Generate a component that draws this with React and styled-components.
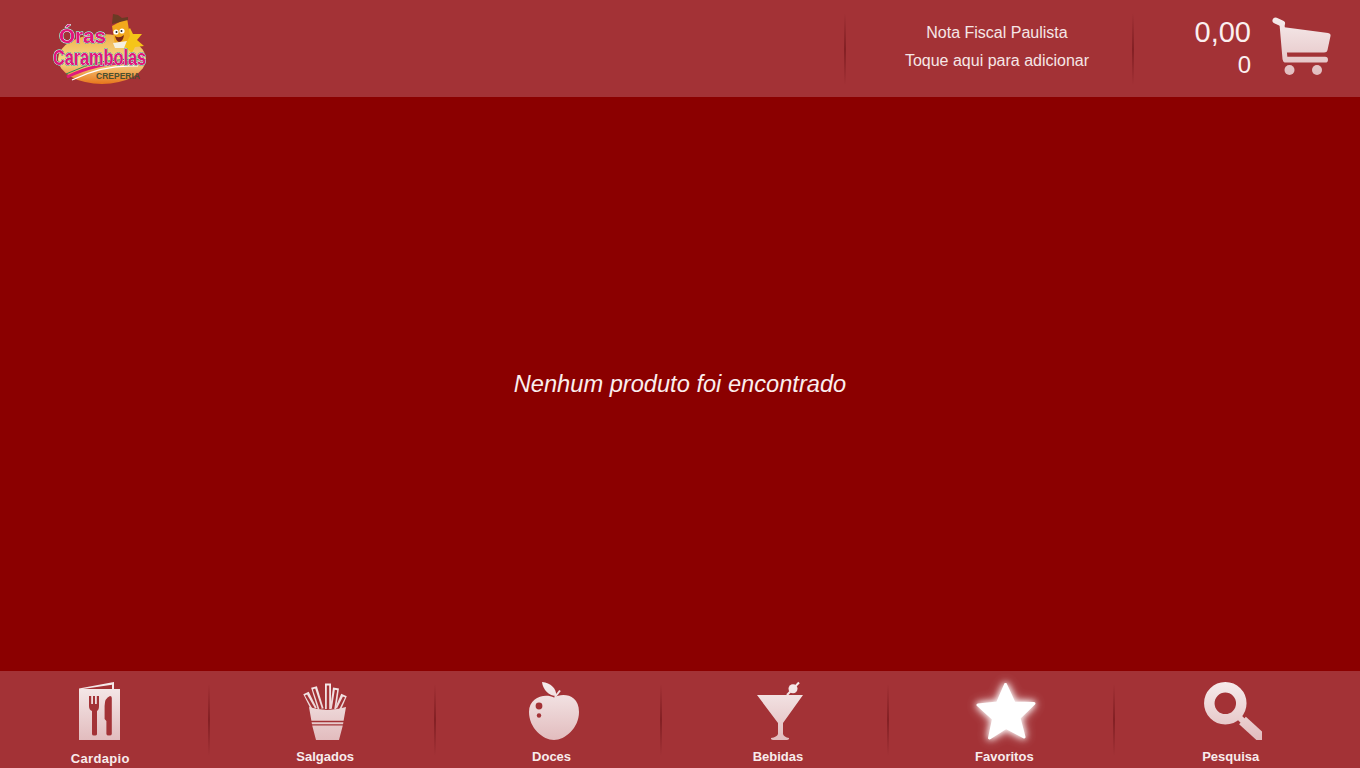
import React from "react";
import styled, { createGlobalStyle } from "styled-components";

const Global = createGlobalStyle`
  html, body { margin: 0; padding: 0; height: 100%; }
  body { background: #8b0000; font-family: "Liberation Sans", Arial, sans-serif; }
  #root { height: 100%; }
`;

const Page = styled.div`
  display: flex;
  flex-direction: column;
  width: 1360px;
  height: 768px;
  overflow: hidden;
`;

const Header = styled.header`
  display: flex;
  align-items: center;
  height: 97px;
  background: #a33236;
`;

const LogoCell = styled.div`
  flex: 1;
  padding-left: 52px;
`;

const Logo = styled.svg`
  display: block;
  width: 96px;
  height: 70px;
  overflow: visible;
`;

const Separator = styled.div`
  flex: none;
  width: 2px;
  height: 72px;
  background: linear-gradient(to bottom, rgba(110, 20, 24, 0), rgba(110, 20, 24, 0.6) 50%, rgba(110, 20, 24, 0));
`;

const Nota = styled.div`
  flex: none;
  width: 286px;
  box-sizing: border-box;
  padding: 0 0 4px 16px;
  text-align: center;
  color: #f6e6e6;
  font-size: 16px;
  line-height: 28px;
`;

const CartCell = styled.div`
  display: flex;
  justify-content: flex-end;
  align-items: center;
  width: 226px;
  padding-right: 29px;
  box-sizing: border-box;
  gap: 21px;
`;

const Totals = styled.div`
  text-align: right;
  color: #fbf0f0;
`;

const Amount = styled.div`
  font-size: 29px;
  line-height: 32px;
`;

const Count = styled.div`
  font-size: 24px;
  line-height: 34px;
`;

const Main = styled.main`
  flex: 1;
  display: flex;
  align-items: center;
  justify-content: center;
  color: #fbeeee;
  font-size: 23.65px;
  font-style: italic;
`;

const Nav = styled.nav`
  display: flex;
  align-items: center;
  height: 97px;
  background: #a33236;
`;

const NavItem = styled.div`
  flex: none;
  display: flex;
  flex-direction: column;
  align-items: center;
  box-sizing: border-box;
  width: ${(p) => (p.$first ? "207.5px" : "224.4px")};
  height: 97px;
  padding: 11px ${(p) => (p.$first ? "7px" : "0")} 0 ${(p) => (p.$first ? "0" : "11px")};
`;

const Icon = styled.svg`
  display: block;
  flex: none;
  height: 58px;
  overflow: visible;
`;

const CartGlyph = styled(Icon)`
  height: 59px;
  margin-bottom: 4px;
`;

const GlowIcon = styled(Icon)`
  filter: drop-shadow(0 0 3px #fff) drop-shadow(0 0 5px rgba(255, 255, 255, 0.7));
`;

const Label = styled.div`
  margin-top: ${(p) => (p.$first ? "11px" : "9px")};
  padding-right: ${(p) => (p.$first ? "0" : "4px")};
  color: #f8ecec;
  font-size: 13px;
  font-weight: bold;
  line-height: 16px;
  letter-spacing: ${(p) => (p.$first ? "0.35px" : "0")};
`;

const LogoWords = styled.g`
  font-family: "Liberation Sans", Arial, sans-serif;
  font-weight: bold;
  fill: #e2157c;
  stroke: #fff;
  stroke-width: 0.9px;
  paint-order: stroke;
  filter: drop-shadow(0 0 0.5px #1f7a4e) drop-shadow(0 0 0.5px #1f7a4e);
`;

const LogoSub = styled.text`
  font-family: "Liberation Sans", Arial, sans-serif;
  font-weight: bold;
  font-size: 8.5px;
  fill: #4a5030;
`;

const RED = "#a33236";

const Fade = ({ id, top = "#f6ecec", bottom = "#e2bcbe", h = 58 }) => (
  <defs>
    <linearGradient id={id} gradientUnits="userSpaceOnUse" x1="0" y1="0" x2="0" y2={h}>
      <stop offset="0" stopColor={top} />
      <stop offset="1" stopColor={bottom} />
    </linearGradient>
  </defs>
);

const MenuIcon = () => (
  <Icon viewBox="0 0 42 58" width="42">
    <Fade id="menu" />
    <path fill="url(#menu)" fillRule="evenodd" d="M0 6.5 L35 0 V7 H41 V58 H0 Z M4 7 H33 V2.8 Z" />
    <path fill={RED} d="M10 14 H12.2 V22 H14 V14 H16 V22 H17.8 V14 H20 V24 Q20 28 18 29 V52 Q18 53.5 15 53.5 Q13 53.5 13 52 V29 Q10 28 10 24 Z" />
    <path fill={RED} d="M31 14 Q32.8 14 32.8 16 V52 Q32.8 53.5 30 53.5 Q27.4 53.5 27.4 52 V39 L25.6 37 V24 Q25.6 16 31 14 Z" />
  </Icon>
);

const fries = [
  [9, 27, 1, 11],
  [15.7, 27, 9, 5],
  [23, 27, 23, 1.5],
  [28, 27, 31, 6],
  [33, 27, 39, 13],
];

const FriesIcon = () => (
  <Icon viewBox="0 0 44 58" width="44">
    <Fade id="fries" />
    {fries.map(([x1, y1, x2, y2]) => (
      <g key={x1}>
        <line x1={x1} y1={y1} x2={x2} y2={y2} stroke="url(#fries)" strokeWidth="6" />
        <line x1={x1} y1={y1} x2={x2} y2={y2 + 2} stroke={RED} strokeWidth="2.4" />
      </g>
    ))}
    <path fill="url(#fries)" d="M4 25 Q22 31 41 25 L38.6 38.8 H6.4 Z M6.6 40.2 H38.4 L38 42.2 H7 Z M7.2 43.6 H37.8 L34 58 H11 Z" />
  </Icon>
);

const AppleIcon = () => (
  <Icon viewBox="0 0 50 58" width="50">
    <Fade id="apple" />
    <path fill="url(#apple)" d="M25 15.5 C32 11 50 11 50 30 C50 46 36 58 25 58 C14 58 0 46 0 30 C0 15 16 11 25 15.5 Z" />
    <path fill="url(#apple)" d="M13 0 C22 1 27 6 27.5 14 C20 14 14 8 13 0 Z" />
    <path stroke="url(#apple)" strokeWidth="2" fill="none" d="M26 15 L31 8.5" />
    <circle cx="10" cy="24" r="3.4" fill={RED} />
    <circle cx="10" cy="33.5" r="2.2" fill={RED} />
  </Icon>
);

const MartiniIcon = () => (
  <Icon viewBox="0 0 46 58" width="46">
    <Fade id="martini" />
    <path fill="url(#martini)" d="M0 13 H46 L26 41 V52 Q27 55 32 56 Q32.5 58 30 58 H16 Q13.5 58 14 56 Q20 55 21 52 V41 Z" />
    <circle cx="36" cy="6.8" r="4.5" fill="url(#martini)" />
    <path stroke="url(#martini)" strokeWidth="2" d="M30 13 L42 0.5" />
  </Icon>
);

const StarIcon = () => (
  <GlowIcon viewBox="0 0 60 58" width="60">
    <path
      fill="#fff"
      stroke="#fff"
      strokeWidth="3"
      strokeLinejoin="round"
      d="M29.5 2.5 L38 21 L58 21.5 L43 36 L48 55 L30 45.5 L13.5 56 L17.5 37 L2 23 L21.5 21 Z"
    />
  </GlowIcon>
);

const SearchIcon = () => (
  <Icon viewBox="0 0 58 58" width="58">
    <Fade id="search" />
    <clipPath id="searchClip">
      <rect x="0" y="0" width="58" height="58" />
    </clipPath>
    <g clipPath="url(#searchClip)">
      <circle cx="21.3" cy="21.3" r="16" fill="none" stroke="url(#search)" strokeWidth="10.5" />
      <path stroke="url(#search)" strokeWidth="6" d="M33 33 L40 40" />
      <path stroke="url(#search)" strokeWidth="10" d="M38.5 38.5 L62 60" />
    </g>
  </Icon>
);

const CartIcon = () => (
  <CartGlyph viewBox="0 0 59 59" width="59">
    <Fade id="cart" h={59} />
    <path stroke="url(#cart)" strokeWidth="6" strokeLinecap="round" fill="none" d="M3.5 3.5 L10 6.5" />
    <path stroke="url(#cart)" strokeWidth="5" strokeLinecap="round" fill="none" d="M10 7 L13 42" />
    <path fill="url(#cart)" d="M10.5 10 L56 16 Q59 16.5 58.5 19 L55.5 33 Q55 35.5 52 35.5 L12.5 35.5 Z" />
    <rect x="11" y="39.8" width="45" height="5.8" rx="2.9" fill="url(#cart)" />
    <circle cx="17.5" cy="53" r="5" fill="url(#cart)" />
    <circle cx="45" cy="53" r="5" fill="url(#cart)" />
  </CartGlyph>
);

const items = [
  { name: "Cardapio", Glyph: MenuIcon },
  { name: "Salgados", Glyph: FriesIcon },
  { name: "Doces", Glyph: AppleIcon },
  { name: "Bebidas", Glyph: MartiniIcon },
  { name: "Favoritos", Glyph: StarIcon },
  { name: "Pesquisa", Glyph: SearchIcon },
];

const LogoArt = () => (
  <Logo viewBox="0 0 96 70">
    <defs>
      <linearGradient id="logoBg" x1="0" y1="0" x2="0" y2="1">
        <stop offset="0" stopColor="#f0b048" />
        <stop offset="0.55" stopColor="#f6d98a" />
        <stop offset="1" stopColor="#e8761c" />
      </linearGradient>
    </defs>
    <ellipse cx="50" cy="45" rx="44" ry="25" fill="url(#logoBg)" />
    <path fill="#f5c518" d="M78 14 L81 20 L90 20 L85 26 L92 32 L83 33 L80 39 L72 32 L70 22 Z" />
    <path fill="#f2a81c" d="M60 12 L75 4 L78 22 L72 33 L63 31 Z" />
    <path fill="#6a3a24" d="M61 0 L66 1 L70 4 L76 3 L76 6 L60 10 Z" />
    <path fill="#f5f0e0" d="M61 29 L75 27 L72 34 L63 34 Z" />
    <circle cx="64" cy="18" r="2.6" fill="#fff" />
    <circle cx="70" cy="17" r="2.6" fill="#fff" />
    <circle cx="64.5" cy="18" r="1" fill="#222" />
    <circle cx="69.5" cy="17" r="1" fill="#222" />
    <path fill="#7a2a18" d="M63 22 Q67 25 72 21 Q71 28 67 28 Q64 27 63 22 Z" />
    <path fill="none" stroke="#2f8a5a" strokeWidth="1" d="M14 60 Q50 42 94 46" />
    <path fill="none" stroke="#e01a7c" strokeWidth="3" d="M15 63 Q50 46 92 49" />
    <path fill="none" stroke="#fff" strokeWidth="1.2" d="M20 66 Q52 50 86 52" />
    <LogoWords>
      <text x="7" y="29" fontSize="21" textLength="47" lengthAdjust="spacingAndGlyphs">Óras</text>
      <text x="1" y="51" fontSize="22" textLength="93" lengthAdjust="spacingAndGlyphs">Carambolas</text>
    </LogoWords>
    <LogoSub x="44" y="64.5" textLength="44" lengthAdjust="spacingAndGlyphs">CREPERIA</LogoSub>
  </Logo>
);

const App = () => {
  return (
    <Page>
      <Global />
      <Header>
        <LogoCell>
          <LogoArt />
        </LogoCell>
        <Separator />
        <Nota>
          <div>Nota Fiscal Paulista</div>
          <div>Toque aqui para adicionar</div>
        </Nota>
        <Separator />
        <CartCell>
          <Totals>
            <Amount>0,00</Amount>
            <Count>0</Count>
          </Totals>
          <CartIcon />
        </CartCell>
      </Header>
      <Main>Nenhum produto foi encontrado</Main>
      <Nav>
        {items.map(({ name, Glyph }, i) => (
          <React.Fragment key={name}>
            {i > 0 && <Separator />}
            <NavItem $first={i === 0}>
              <Glyph />
              <Label $first={i === 0}>{name}</Label>
            </NavItem>
          </React.Fragment>
        ))}
      </Nav>
    </Page>
  );
};

export default App;
